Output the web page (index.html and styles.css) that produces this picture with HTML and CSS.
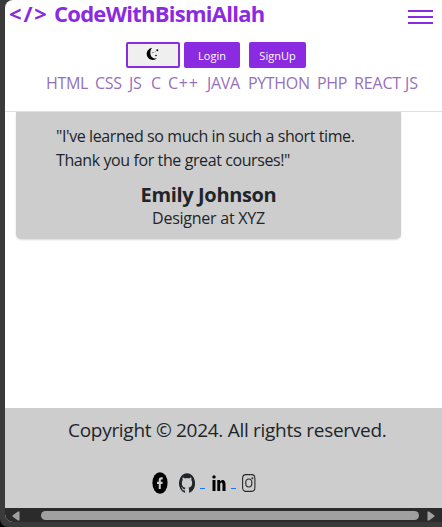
FILE: index.html
```html
<!DOCTYPE html>
<html lang="en">
<head>
<meta charset="utf-8">
<title>CodeWithBismiAllah</title>
<link rel="stylesheet" href="styles.css">
</head>
<body>
<div class="frame">
  <div class="window">
    <header class="header">
      <div class="brand-row">
        <div class="brand"><span class="tag">&lt;/&gt;</span><span class="name">CodeWithBismiAllah</span></div>
        <div class="burger"><i></i><i></i><i></i></div>
      </div>
      <div class="actions">
        <button class="theme" aria-label="Theme">
          <svg width="16" height="14" viewBox="0 0 16 14"><path d="M7.200.8A6.100 6.100 0 1 0 12 11.300C7.500 12.100 5.200 9 5.400 5.800 5.400 3.700 6 1.800 7.200.8Z"/><circle cx="12.300" cy="3.200" r="1"/><circle cx="11" cy="8.500" r=".8"/><circle cx="8" cy="5.500" r=".5"/><circle cx="10.500" cy="4.800" r=".4"/></svg>
        </button>
        <button class="btn login"><span>Login</span></button>
        <button class="btn signup"><span>SignUp</span></button>
      </div>
      <nav class="nav">
        <a>HTML</a><a>CSS</a><a>JS</a><a>C</a><a class="cpp">C++</a><a>JAVA</a><a>PYTHON</a><a>PHP</a><a class="react">REACT JS</a>
      </nav>
    </header>
    <main class="main">
      <article class="card">
        <p class="quote"><span class="q1">"I've learned so much in such a short time.</span><br><span class="q2">Thank you for the great courses!"</span></p>
        <h2>Emily Johnson</h2>
        <p class="role">Designer at XYZ</p>
      </article>
    </main>
    <footer class="footer">
      <p>Copyright © 2024. All rights reserved.</p>
      <div class="social">
        <svg class="fb" width="16" height="22" viewBox="0 0 16 22"><ellipse cx="8" cy="11" rx="7.600" ry="10.800"/><path fill="#cdcdcd" d="M6.700 17v-5H5v-2.200h1.700V8.300c0-2 .9-3.100 2.500-3.100h1.500v2.300h-1c-.7 0-.9.4-.9 1.100v1.200h1.900l-.3 2.200H8.800v5Z"/></svg>
        <svg class="gh" width="16" height="20" viewBox="0 0 24 24" preserveAspectRatio="none"><path fill="#22252b" d="M12 .3a12 12 0 0 0-3.800 23.400c.6.1.8-.3.8-.6v-2.200c-3.300.7-4-1.400-4-1.400-.6-1.400-1.400-1.800-1.400-1.800-1-.7.1-.7.1-.7 1.200 0 1.900 1.200 1.900 1.200 1 1.800 2.800 1.300 3.500 1 0-.8.4-1.300.7-1.600-2.700-.3-5.500-1.300-5.500-6 0-1.200.5-2.300 1.300-3.100-.2-.4-.6-1.600 0-3.200 0 0 1-.3 3.400 1.200a11.500 11.500 0 0 1 6 0c2.300-1.500 3.300-1.200 3.300-1.200.7 1.600.2 2.800.1 3.200.8.800 1.300 1.900 1.300 3.200 0 4.600-2.800 5.600-5.500 5.900.5.400.9 1 .9 2.200v3.300c0 .3.100.7.800.6A12 12 0 0 0 12 .3"/></svg>
        <i class="dash"></i>
        <svg class="li" width="14" height="16" viewBox="0 0 14 16"><circle cx="2" cy="1.900" r="1.700"/><path d="M.5 5h3v11h-3ZM5.300 5h2.800v1.500C9.900 3.900 13.500 4.400 13.500 8.800V16h-3V9.500c0-3-2.300-2.500-2.300 0V16H5.300Z"/></svg>
        <i class="dash"></i>
        <svg class="ig" width="14" height="18" viewBox="0 0 14 18" fill="none" stroke="#292929" stroke-width="1.100"><rect x=".6" y=".6" width="12.300" height="16.800" rx="3.200" ry="3.800"/><ellipse cx="6.800" cy="9" rx="3.100" ry="4"/><circle cx="10.400" cy="4.300" r=".4"/></svg>
      </div>
    </footer>
    <div class="scrollbar">
      <svg class="arrow-left" width="8" height="10" viewBox="0 0 8 10"><path d="M7.500.5v9H6L.5 5.500v-1L6 .5Z"/></svg>
      <div class="thumb"></div>
      <svg class="arrow-right" width="8" height="10" viewBox="0 0 8 10"><path d="M.5.500v9H2l5.500-4v-1L2 .5Z"/></svg>
    </div>
  </div>
</div>
</body>
</html>
```
FILE: styles.css
```css
* { box-sizing: border-box; margin: 0; padding: 0; }
body { width: 442px; height: 527px; overflow: hidden; background: #000; font-family: "Open Sans", "Noto Sans", sans-serif; color: #212529; white-space: nowrap; }
svg { display: block; flex: none; }
.frame { width: 442px; height: 527px; padding: 0 0 5px 5px; background: #3a3a3a; border-bottom-left-radius: 8px; }
.window { width: 437px; height: 522px; background: #fff; border-radius: 8px 0 0 8px; overflow: hidden; display: flex; flex-direction: column; }
.header { height: 112px; border-bottom: 1px solid #dee2e6; flex: none; }
.brand-row { height: 42px; display: flex; justify-content: space-between; padding: 0 9px 0 4px; }
.brand { display: flex; color: #8a2be2; font-size: 22px; font-weight: 700; line-height: 27px; }
.tag { width: 45px; letter-spacing: 1.8px; }
.name { letter-spacing: -0.73px; }
.burger { width: 25px; padding-top: 10px; display: flex; flex-direction: column; gap: 4px; }
.burger i { height: 2px; background: #8a2be2; }
.actions { display: flex; padding-left: 121px; height: 26px; }
.theme { width: 54px; height: 26px; border: 2px solid #8a2be2; border-radius: 2px; background: #efefef; display: flex; justify-content: center; padding-top: 3px; }
.btn { height: 26px; border: 0; border-radius: 2px; background: #8a2be2; color: #fff; font: 11px/28px "Open Sans", sans-serif; }
.login { width: 56px; margin-left: 4px; }
.signup { width: 57px; margin-left: 9px; }
.nav { display: grid; grid-template-columns: 49px 34px 22px 17px 39px 41px 69px 37px 70px; padding-left: 41px; font-size: 16px; line-height: 31px; color: #9670ba; letter-spacing: -0.35px; }
.cpp { letter-spacing: 0.7px; }
.react { letter-spacing: -0.15px; }
.main { height: 296px; padding-left: 11px; flex: none; }
.card { width: 385px; height: 127px; background: #cdcdcd; border-radius: 0 0 5px 5px; box-shadow: 0 1px 2px rgba(0,0,0,.15); padding-top: 12px; text-align: center; }
.quote { text-align: left; padding-left: 40px; font-size: 16px; line-height: 24px; letter-spacing: -0.4px; }
h2 { font-size: 20px; line-height: 24px; margin-top: 11px; letter-spacing: -0.35px; }
.role { font-size: 16px; line-height: 23px; letter-spacing: -0.25px; }
.footer { height: 100px; background: #cdcdcd; flex: none; }
.footer p { padding: 8px 0 0 63px; font-size: 19px; line-height: 29px; letter-spacing: -0.29px; }
.social { display: flex; height: 22px; margin: 27px 0 0 147px; align-items: center; }
.gh { margin-left: 11px; }
.dash { width: 5px; height: 1px; flex: none; background: #1677ff; align-self: flex-start; margin: 16px 0 0 5px; }
.li { margin-left: 7px; }
.ig { margin-left: 6px; }
.scrollbar { height: 14px; background: #2b2b2b; display: flex; align-items: center; padding: 1px 7px 0 7px; }
.scrollbar svg { fill: #a0a0a0; }
.thumb { width: 378px; height: 9px; border-radius: 5px; background: #a0a0a0; margin: 0 8px 0 21px; flex: none; }
```
